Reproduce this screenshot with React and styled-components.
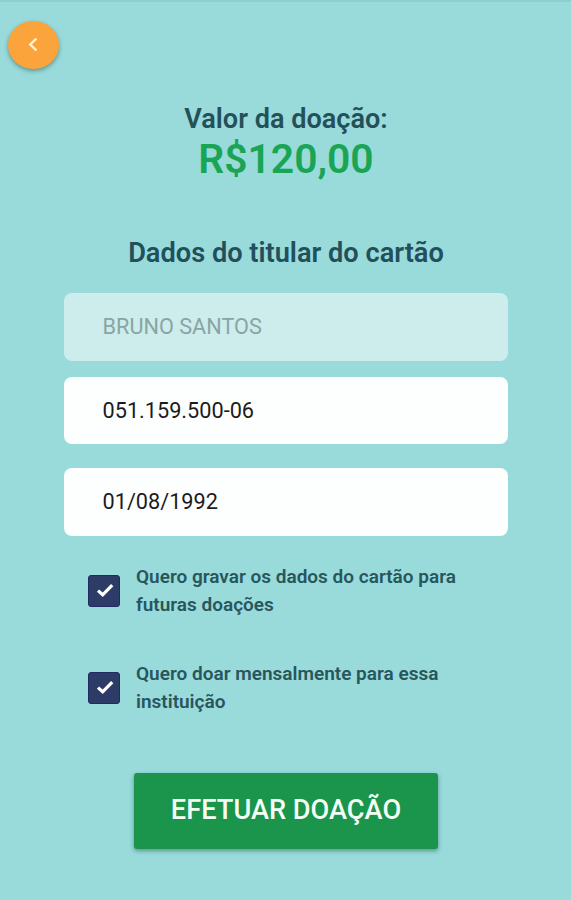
import React, { useState } from 'react';
import styled, { createGlobalStyle } from 'styled-components';

const GlobalStyle = createGlobalStyle`
  * {
    box-sizing: border-box;
  }

  body {
    margin: 0;
    background-color: #99dadb;
    font-family: Roboto, sans-serif;
  }

  button,
  input {
    font-family: inherit;
  }
`;

const Screen = styled.main`
  height: 900px;
  display: flex;
  flex-direction: column;
  align-items: center;
  border-top: 2px solid #8fcdd1;
  overflow: hidden;
`;

const Header = styled.header`
  width: 100%;
  height: 101px;
  padding: 19px 8px 0;
`;

const BackButton = styled.button`
  width: 51px;
  height: 48px;
  display: flex;
  align-items: center;
  justify-content: center;
  padding: 0 1px 1px 0;
  border: none;
  border-radius: 50%;
  background-color: #fca43c;
  box-shadow: 0 2px 4px rgba(40, 80, 80, 0.5);
  cursor: pointer;
`;

const AmountLabel = styled.h2`
  margin: 0 0 0 1px;
  color: #24505a;
  font-size: 27.1px;
  font-weight: 600;
  line-height: 32px;
`;

const Amount = styled.strong`
  margin-left: 1px;
  color: #1aa554;
  font-size: 40.8px;
  font-weight: 600;
  line-height: 48px;
`;

const Title = styled.h1`
  margin: 54px 0 24px 1px;
  color: #22505a;
  font-size: 27.2px;
  font-weight: 600;
  line-height: 32px;
`;

const Form = styled.form`
  width: 444px;
  display: flex;
  flex-direction: column;
`;

const Field = styled.input`
  height: ${({ $height }) => $height}px;
  margin-bottom: ${({ $gap }) => $gap}px;
  padding: 0 39px 1px;
  border: none;
  border-radius: 8px;
  background-color: #fdfffe;
  color: #1c1c1c;
  font-size: 21.7px;

  &:disabled {
    background-color: #cdecec;
    color: #88a5a4;
  }
`;

const Option = styled.label`
  height: 56px;
  display: flex;
  align-items: center;
  gap: 16px;
  margin-bottom: 41px;
  padding-left: 24px;
  color: #27565c;
  font-size: 19px;
  font-weight: 600;
  line-height: 28px;
  cursor: pointer;
`;

const HiddenCheckbox = styled.input`
  appearance: none;
  width: 0;
  height: 0;
  margin: 0 -16px 0 0;
`;

const CheckBox = styled.span`
  flex: none;
  width: 32px;
  height: 32px;
  display: flex;
  align-items: center;
  justify-content: center;
  padding: 0 0 2px 2px;
  border: 1px solid #222963;
  border-radius: 3px;
  background-color: #2d3c67;
`;

const OptionText = styled.span`
  width: 340px;
  padding-left: 0.5px;
`;

const SubmitButton = styled.button`
  align-self: center;
  width: 304px;
  height: 76px;
  margin: 16px 0 0 1px;
  padding: 0 0 2px;
  border: none;
  border-radius: 3px;
  background-color: #1a954b;
  box-shadow: 0 2px 4px rgba(30, 80, 70, 0.5);
  color: #f4fff6;
  font-size: 27.2px;
  font-weight: 500;
  cursor: pointer;
`;

function CheckOption({ children }) {
  const [checked, setChecked] = useState(true);

  return (
    <Option>
      <HiddenCheckbox type="checkbox" checked={checked} onChange={() => setChecked(!checked)} />
      <CheckBox>
        {checked && (
          <svg width="18" height="15" viewBox="0 0 18 15" fill="none" stroke="#fff" strokeWidth="3.2">
            <path d="M2 7.6 L6.7 11.8 L16.2 2.1" />
          </svg>
        )}
      </CheckBox>
      <OptionText>{children}</OptionText>
    </Option>
  );
}

function App() {
  const [document, setDocument] = useState('051.159.500-06');
  const [birthDate, setBirthDate] = useState('01/08/1992');

  return (
    <>
      <GlobalStyle />
      <Screen>
        <Header>
          <BackButton aria-label="Voltar">
            <svg width="10" height="15" viewBox="0 0 10 15" fill="none" stroke="#fff6e0" strokeWidth="2.3">
              <path d="M8.4 1.7 L2.2 7.5 L8.4 13.3" />
            </svg>
          </BackButton>
        </Header>
        <AmountLabel>Valor da doação:</AmountLabel>
        <Amount>R$120,00</Amount>
        <Title>Dados do titular do cartão</Title>
        <Form onSubmit={(e) => e.preventDefault()}>
          <Field $height={68} $gap={16} value="BRUNO SANTOS" disabled />
          <Field $height={67} $gap={24} value={document} onChange={(e) => setDocument(e.target.value)} />
          <Field $height={68} $gap={27} value={birthDate} onChange={(e) => setBirthDate(e.target.value)} />
          <CheckOption>Quero gravar os dados do cartão para futuras doações</CheckOption>
          <CheckOption>Quero doar mensalmente para essa instituição</CheckOption>
          <SubmitButton type="submit">EFETUAR DOAÇÃO</SubmitButton>
        </Form>
      </Screen>
    </>
  );
}

export default App;
